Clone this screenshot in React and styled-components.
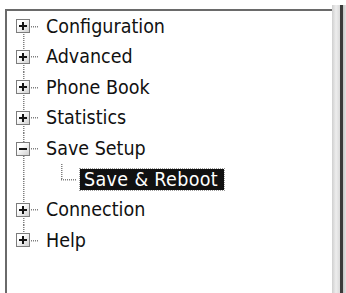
import React from 'react'
import styled, { createGlobalStyle } from 'styled-components'

const GlobalStyle = createGlobalStyle`
  html, body {
    margin: 0;
    padding: 0;
    background: #ffffff;
  }
  body {
    width: 346px;
    height: 293px;
    overflow: hidden;
  }
`

const items = [
  { label: 'Configuration' },
  { label: 'Advanced' },
  { label: 'Phone Book' },
  { label: 'Statistics' },
  { label: 'Save Setup', open: true, children: ['Save & Reboot'] },
  { label: 'Connection' },
  { label: 'Help' },
]

const dotsV = 'repeating-linear-gradient(to bottom, #7e7e7e 0 1px, transparent 1px 2px)'
const dotsH = 'repeating-linear-gradient(to right, #7e7e7e 0 1px, transparent 1px 2px)'

const lines = ({ $up, $down, $right }) => {
  const img = []
  const pos = []
  const size = []
  if ($up) {
    img.push(dotsV)
    pos.push('16px top')
    size.push('1.5px 50%')
  }
  if ($down) {
    img.push(dotsV)
    pos.push('16px bottom')
    size.push('1.5px 50%')
  }
  if ($right) {
    img.push(dotsH)
    pos.push('16px center')
    size.push('17px 1.5px')
  }
  if (!img.length) return ''
  return `
    background-image: ${img.join(', ')};
    background-position: ${pos.join(', ')};
    background-size: ${size.join(', ')};
    background-repeat: no-repeat;
  `
}

const App = () => {
  return (
    <>
      <GlobalStyle />
      <Frame>
        <Panel>
          {items.map((item, i) => {
            const first = i === 0
            const last = i === items.length - 1
            return (
              <React.Fragment key={item.label}>
                <Row>
                  <Gutter $up={!first} $down={!last} $right>
                    <Expander>
                      <svg width="12" height="12" viewBox="0 0 12 12">
                        <rect x="2" y="5" width="8" height="2" fill="#141414" />
                        {!item.open && <rect x="5" y="2" width="2" height="8" fill="#141414" />}
                      </svg>
                    </Expander>
                  </Gutter>
                  <Label>{item.label}</Label>
                </Row>
                {item.open &&
                  item.children.map((child) => (
                    <Row key={child}>
                      <Gutter $up $down={!last} />
                      <ChildGutter $up $right />
                      <Selected>{child}</Selected>
                    </Row>
                  ))}
              </React.Fragment>
            )
          })}
        </Panel>
        <Edge />
      </Frame>
    </>
  )
}

const Frame = styled.div`
  display: flex;
  height: 288px;
  margin-top: 5px;
  margin-left: 5px;
`

const Panel = styled.div`
  flex: 1;
  margin-top: 4px;
  border-top: 2px solid #6a6a6a;
  border-left: 2px solid #6a6a6a;
  background: #ffffff;
  font-family: "DejaVu Sans Condensed", "DejaVu Sans", "Liberation Sans", sans-serif;
  font-stretch: condensed;
  font-size: 19.5px;
  color: #111111;
`

const Edge = styled.div`
  width: 14px;
  background: linear-gradient(
    to right,
    #cfcfcf 0,
    #ededed 4px,
    #dadada 8px,
    #3a3a3a 8px,
    #3a3a3a 11px,
    #c4c4c4 11px,
    #e2e2e2 14px
  );
`

const Row = styled.div`
  display: flex;
  align-items: center;
  height: 30.6px;
`

const Gutter = styled.div`
  width: 32px;
  align-self: stretch;
  display: flex;
  align-items: center;
  padding-left: 9px;
  box-sizing: border-box;
  ${lines}
`

const ChildGutter = styled(Gutter)`
  margin-left: 6px;
`

const Expander = styled.span`
  display: flex;
  align-items: center;
  justify-content: center;
  width: 14px;
  height: 14px;
  box-sizing: border-box;
  border: 1px solid #7c7c7c;
  background: linear-gradient(135deg, #ffffff 30%, #d0d0d0 100%);
`

const Label = styled.span`
  margin-left: 7px;
  white-space: nowrap;
  line-height: 1;
`

const Selected = styled.span`
  margin-left: 3px;
  padding: 0 6px 0 4px;
  height: 21px;
  display: flex;
  align-items: center;
  background: #111111;
  color: #ffffff;
  letter-spacing: 0.35px;
  outline: 1px dotted #9a9a9a;
  white-space: nowrap;
`

export default App
